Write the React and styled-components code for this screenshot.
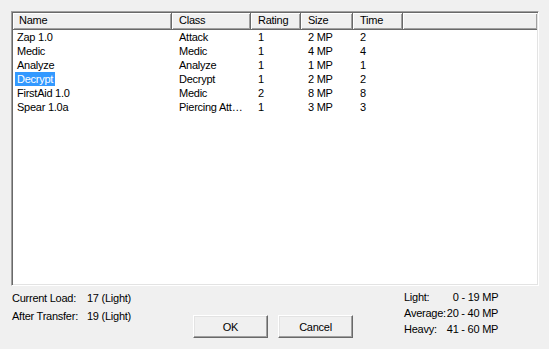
import React from 'react'
import styled, { createGlobalStyle } from 'styled-components'

const GlobalStyle = createGlobalStyle`
  html, body {
    margin: 0;
    padding: 0;
    background: #f0f0f0;
  }
  body {
    font-family: "Liberation Sans", Arial, sans-serif;
    font-size: 11px;
    color: #000;
  }
`

const programs = [
  { name: 'Zap 1.0', cls: 'Attack', rating: 1, size: '2 MP', time: 2 },
  { name: 'Medic', cls: 'Medic', rating: 1, size: '4 MP', time: 4 },
  { name: 'Analyze', cls: 'Analyze', rating: 1, size: '1 MP', time: 1 },
  { name: 'Decrypt', cls: 'Decrypt', rating: 1, size: '2 MP', time: 2, selected: true },
  { name: 'FirstAid 1.0', cls: 'Medic', rating: 2, size: '8 MP', time: 8 },
  { name: 'Spear 1.0a', cls: 'Piercing Attack', rating: 1, size: '3 MP', time: 3 },
]

const columns = '159px 79px 50px 52px 50px 1fr'

function App() {
  return (
    <Dialog>
      <GlobalStyle />
      <ListBox>
        <Header>
          <HeadCell $first>Name</HeadCell>
          <HeadCell>Class</HeadCell>
          <HeadCell>Rating</HeadCell>
          <HeadCell>Size</HeadCell>
          <HeadCell>Time</HeadCell>
          <HeadCell />
        </Header>
        {programs.map((p) => (
          <Row key={p.name}>
            <NameCell>
              <Label $selected={p.selected}>{p.name}</Label>
            </NameCell>
            <Cell>{p.cls}</Cell>
            <Cell>{p.rating}</Cell>
            <Cell>{p.size}</Cell>
            <Cell>{p.time}</Cell>
          </Row>
        ))}
      </ListBox>
      <Footer>
        <Status>
          <span>Current Load:</span>
          <span>17 (Light)</span>
          <span>After Transfer:</span>
          <span>19 (Light)</span>
        </Status>
        <Buttons>
          <Button>OK</Button>
          <Button>Cancel</Button>
        </Buttons>
        <Legend>
          <span>Light:</span>
          <LegendValue $indent>0 - 19 MP</LegendValue>
          <span>Average:</span>
          <LegendValue>20 - 40 MP</LegendValue>
          <span>Heavy:</span>
          <LegendValue>41 - 60 MP</LegendValue>
        </Legend>
      </Footer>
    </Dialog>
  )
}

const Dialog = styled.div`
  width: 549px;
  height: 349px;
  background: #f0f0f0;
  padding: 11px 0 0 11px;
  box-sizing: border-box;
  letter-spacing: -0.25px;
  overflow: hidden;
`

const ListBox = styled.div`
  width: 528px;
  height: 275px;
  box-sizing: border-box;
  background: #fff;
  border: 1px solid;
  border-color: #a0a0a0 #fff #fff #a0a0a0;
  box-shadow: inset 1px 1px #696969, inset -1px -1px #e3e3e3;
  padding: 1px;
`

const Header = styled.div`
  display: grid;
  grid-template-columns: ${columns};
  height: 17px;
  background: #f0f0f0;
`

const HeadCell = styled.div`
  box-sizing: border-box;
  height: 17px;
  line-height: 15px;
  padding-left: ${(p) => (p.$first ? '6px' : '7px')};
  border-right: 1px solid #696969;
  border-bottom: 1px solid #696969;
  box-shadow: inset 1px 1px #fff, inset -1px -1px #a0a0a0;
  white-space: nowrap;
  overflow: hidden;

  &:last-child {
    border-right: none;
  }
`

const Row = styled.div`
  display: grid;
  grid-template-columns: ${columns};
  height: 14px;
  line-height: 14px;
`

const Cell = styled.div`
  padding-left: 7px;
  padding-right: 4px;
  white-space: nowrap;
  overflow: hidden;
  text-overflow: ellipsis;
`

const NameCell = styled.div`
  padding-left: 2px;
  white-space: nowrap;
`

const Label = styled.span`
  display: inline-block;
  padding: 0 2px;
  background: ${(p) => (p.$selected ? '#3399ff' : 'transparent')};
  color: ${(p) => (p.$selected ? '#fff' : '#000')};
`

const Footer = styled.div`
  display: flex;
  height: 63px;
`

const Status = styled.div`
  display: grid;
  grid-template-columns: 75px auto;
  grid-auto-rows: 18px;
  align-content: start;
  line-height: 18px;
  padding: 3px 0 0 1px;
  width: 181px;
`

const Buttons = styled.div`
  display: flex;
  gap: 10px;
  padding-top: 29px;
  width: 211px;
`

const Button = styled.button`
  width: 75px;
  height: 23px;
  box-sizing: border-box;
  background: #f0f0f0;
  font-family: "Liberation Sans", Arial, sans-serif;
  font-size: 11px;
  letter-spacing: -0.25px;
  color: #000;
  padding: 0;
  border: 1px solid;
  border-color: #fff #696969 #696969 #fff;
  box-shadow: inset -1px -1px #a0a0a0, inset 1px 1px #e3e3e3;
  border-radius: 0;
`

const Legend = styled.div`
  display: grid;
  grid-template-columns: auto auto;
  column-gap: 1px;
  grid-auto-rows: 16px;
  align-content: start;
  line-height: 16px;
  padding-top: 3px;
`

const LegendValue = styled.span`
  padding-left: ${(p) => (p.$indent ? '6px' : '0')};
`

export default App
